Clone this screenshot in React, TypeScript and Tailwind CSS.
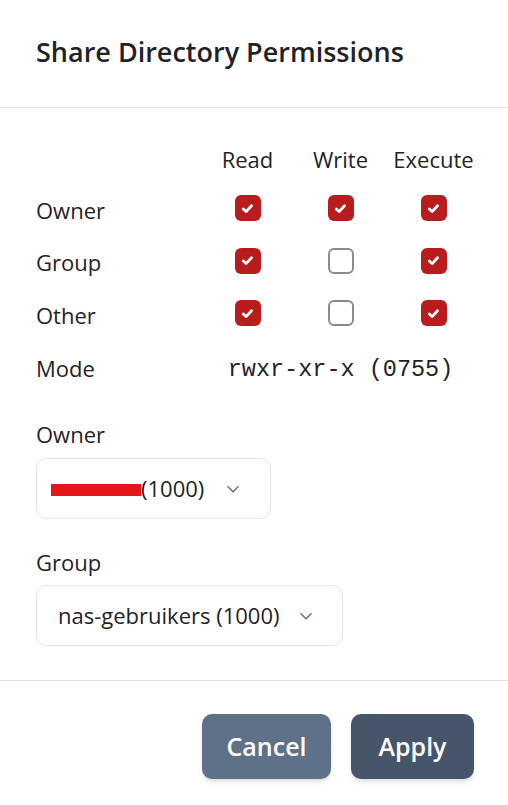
import React, { useState } from "react";

const font = { fontFamily: '"Open Sans", "Noto Sans", sans-serif' };

type Perm = { read: boolean; write: boolean; execute: boolean };

const Check = ({ checked, onToggle }: { checked: boolean; onToggle: () => void }) => (
	<button
		onClick={onToggle}
		className={`w-[26px] h-[26px] rounded-[6px] flex items-center justify-center ${
			checked ? "bg-[#b91c1c]" : "bg-white border-2 border-[#8a8a8a]"
		}`}>
		{checked && (
			<svg width="15" height="15" viewBox="0 0 16 16" fill="none">
				<path d="M3.5 8.5l3 2.8 5.8-6.3" stroke="white" strokeWidth="3" strokeLinecap="round" strokeLinejoin="round" />
			</svg>
		)}
	</button>
);

const Chevron = () => (
	<svg width="18" height="18" viewBox="0 0 16 16" fill="none">
		<path d="M3.5 6l4.5 4.5L12.5 6" stroke="#6b7280" strokeWidth="1.4" strokeLinecap="round" strokeLinejoin="round" />
	</svg>
);

export default function App() {
	const [perms, setPerms] = useState<Record<string, Perm>>({
		Owner: { read: true, write: true, execute: true },
		Group: { read: true, write: false, execute: true },
		Other: { read: true, write: false, execute: true }
	});

	const toggle = (who: string, key: keyof Perm) =>
		setPerms((p) => ({ ...p, [who]: { ...p[who], [key]: !p[who][key] } }));

	return (
		<div className="w-[508px] h-[805px] bg-white text-[#1f2329] flex flex-col" style={font}>
			{/* Header */}
			<div className="h-[108px] pl-[36px] pt-[34px] border-b border-[#e2e2e2]">
				<h2 className="text-[27px] font-semibold leading-[36px]">Share Directory Permissions</h2>
			</div>

			{/* Body */}
			<div className="pl-[36px] pt-[28px]">
				<div className="grid grid-cols-[165px_93px_93px_93px] text-[22px]">
					<div className="h-[46px]" />
					<div className="h-[46px] flex items-center justify-center font-medium">Read</div>
					<div className="h-[46px] flex items-center justify-center font-medium">Write</div>
					<div className="h-[46px] flex items-center justify-center font-medium">Execute</div>

					{Object.keys(perms).map((who) => (
						<React.Fragment key={who}>
							<div className="h-[52.5px] flex items-center pt-[4px] font-medium">{who}</div>
							{(["read", "write", "execute"] as (keyof Perm)[]).map((k) => (
								<div key={k} className="h-[52.5px] flex items-center justify-center">
									<Check checked={perms[who][k]} onToggle={() => toggle(who, k)} />
								</div>
							))}
						</React.Fragment>
					))}

					<div className="h-[52.5px] flex items-center pt-[5px] font-medium">Mode</div>
					<div
						className="col-span-3 h-[52.5px] flex items-center justify-center pt-[8px] text-[23.5px]"
						style={{ fontFamily: '"Liberation Mono", monospace' }}>
						rwxr-xr-x (0755)
					</div>
				</div>

				{/* Owner select */}
				<div className="mt-[27px] text-[22px] font-medium leading-[30px]">Owner</div>
				<div className="mt-[9px] w-[235px] h-[61px] rounded-[10px] border border-[#e5e5e5] flex items-center pl-[14px] pr-[28px] text-[22px]">
					<span className="w-[90px] h-[12px] mt-[2px] bg-[#e3161b]" />
					<span>(1000)</span>
					<span className="ml-auto">
						<Chevron />
					</span>
				</div>

				{/* Group select */}
				<div className="mt-[28px] text-[22px] font-medium leading-[30px]">Group</div>
				<div className="mt-[8px] w-[307px] h-[61px] rounded-[10px] border border-[#e5e5e5] flex items-center pl-[21px] pr-[27px] text-[22px]">
					<span>nas-gebruikers (1000)</span>
					<span className="ml-auto">
						<Chevron />
					</span>
				</div>
			</div>

			{/* Footer */}
			<div className="mt-[34px] border-t border-[#e2e2e2] flex justify-end gap-[20px] pr-[34px] pt-[33px]">
				<button className="w-[129px] h-[65px] rounded-[10px] bg-[#5f7189] text-white text-[25px] font-semibold shadow-md">
					Cancel
				</button>
				<button className="w-[123px] h-[65px] rounded-[10px] bg-[#46556a] text-white text-[25px] font-semibold shadow-md">
					Apply
				</button>
			</div>
		</div>
	);
}
